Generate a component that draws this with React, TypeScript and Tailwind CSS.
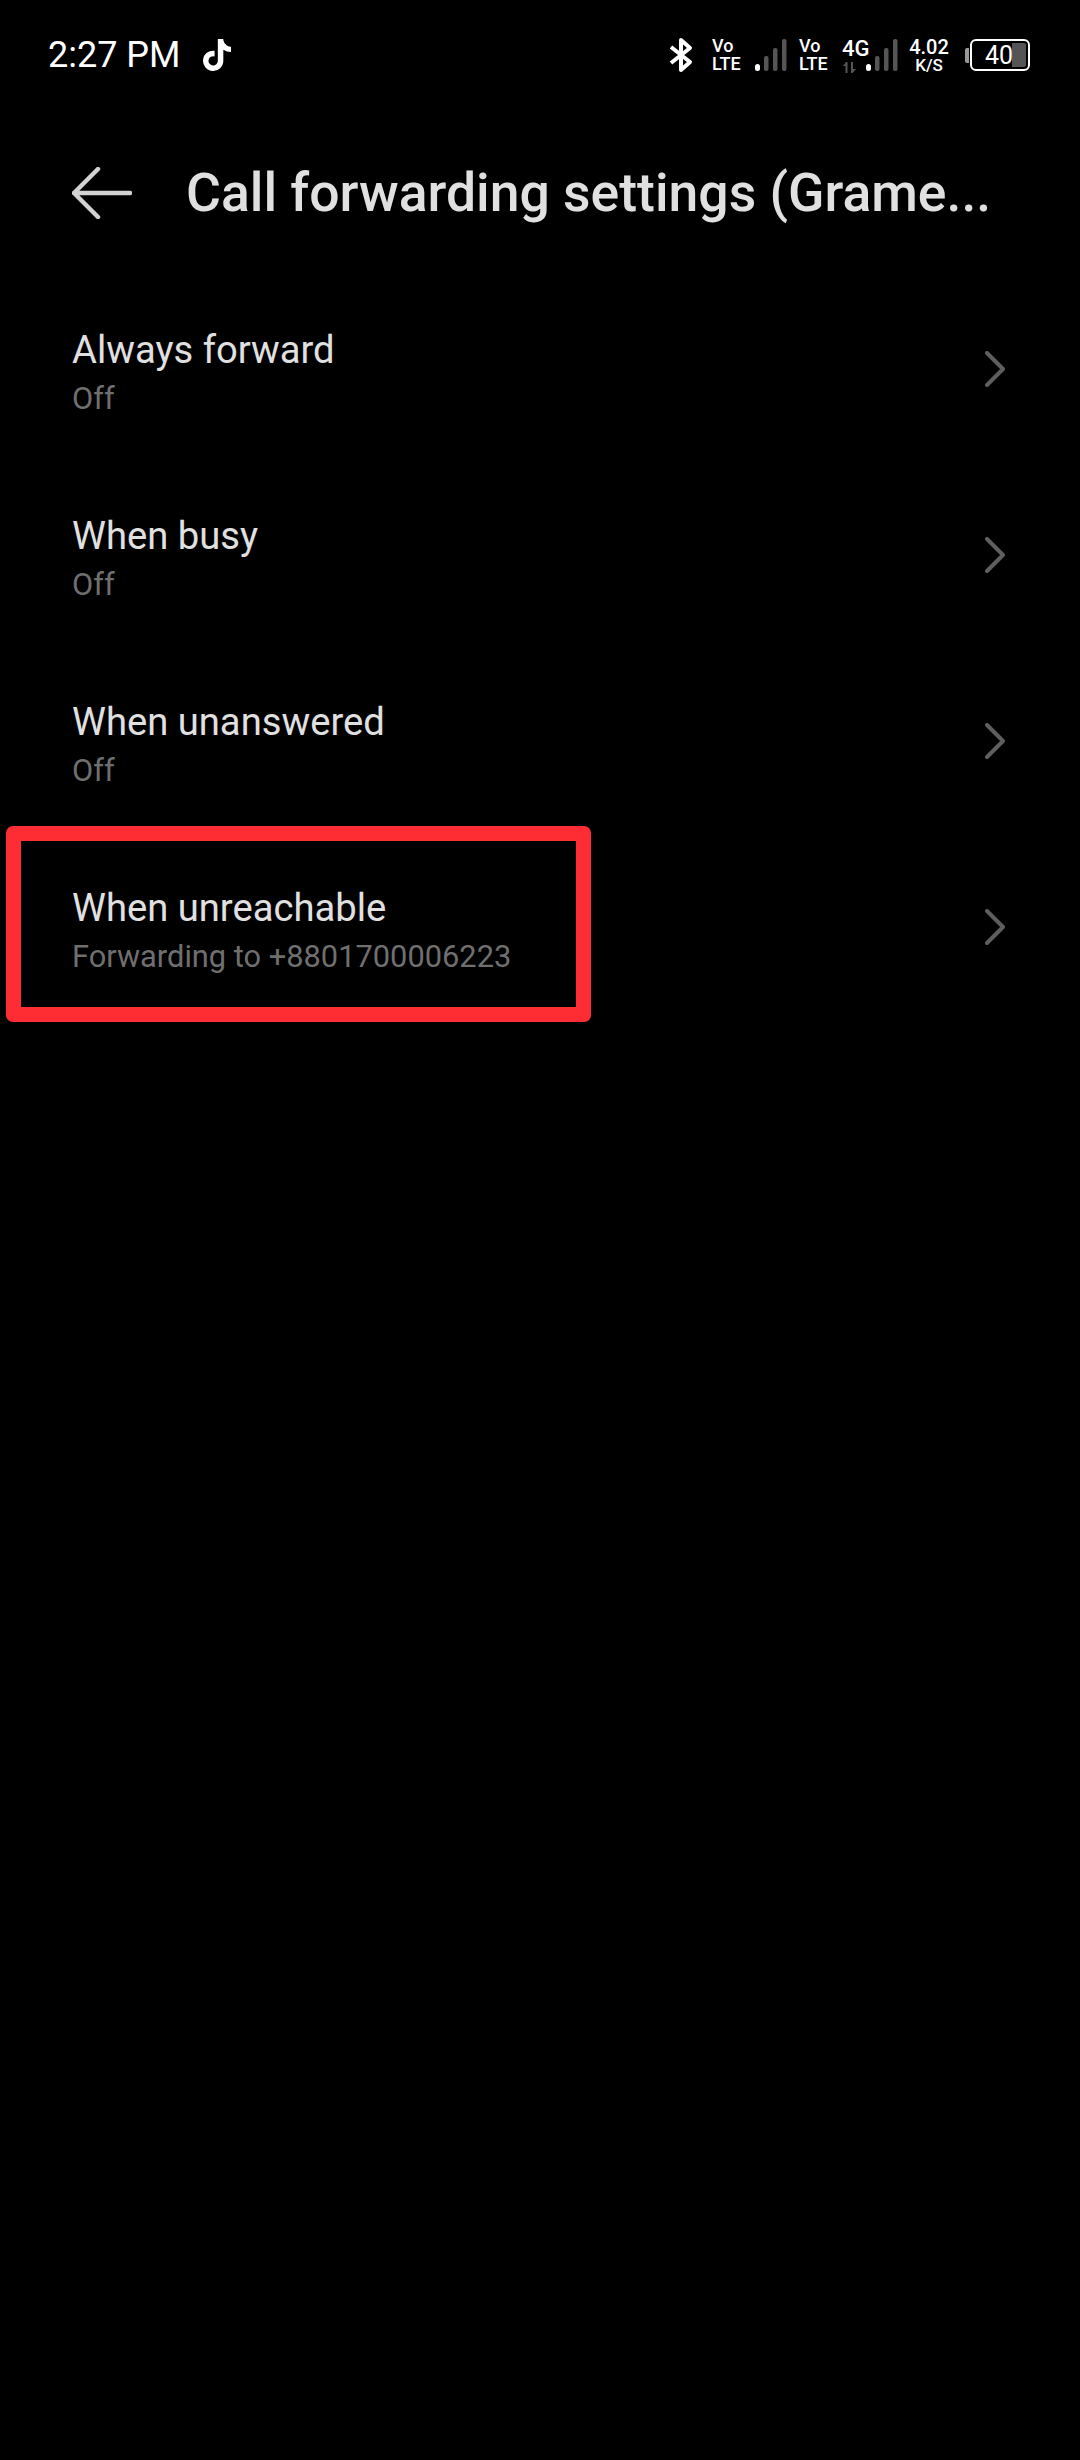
import { FaTiktok } from "react-icons/fa"

const rows = [
  { title: "Always forward", sub: "Off" },
  { title: "When busy", sub: "Off" },
  { title: "When unanswered", sub: "Off" },
  { title: "When unreachable", sub: "Forwarding to +8801700006223", boxed: true },
]

function SignalBars() {
  return (
    <svg width="32" height="32" viewBox="0 0 32 32" className="shrink-0">
      <rect x="0" y="25" width="5" height="7" rx="2.5" fill="#fff" />
      <rect x="9" y="17" width="4.5" height="15" rx="2" fill="#555" />
      <rect x="18" y="9" width="4.5" height="23" rx="2" fill="#555" />
      <rect x="27" y="0" width="4.5" height="32" rx="2" fill="#555" />
    </svg>
  )
}

function VoLte() {
  return (
    <div className="flex flex-col items-start w-[30px] shrink-0 font-medium text-white leading-[18px]">
      <span className="text-[18px]">Vo</span>
      <span className="text-[18px]">LTE</span>
    </div>
  )
}

function StatusBar() {
  return (
    <div className="h-[70px] pt-[40px] pl-[48px] flex items-center justify-between text-white">
      <div className="flex items-center">
        <span className="text-[36px] leading-none">2:27 PM</span>
        <FaTiktok className="ml-[20px] text-[32px]" />
      </div>
      <div className="flex items-center pr-[50px]">
        <svg width="24" height="36" viewBox="0 0 24 36" fill="none" stroke="#fff" strokeWidth="4" strokeLinejoin="round" className="mr-[19px]">
          <path d="M2 10 L21 25 L12 33 V3 L21 11 L2 26" />
        </svg>
        <VoLte />
        <div className="ml-[13px]"><SignalBars /></div>
        <div className="ml-[12px]"><VoLte /></div>
        <div className="ml-[13px] w-[24px] flex flex-col items-start shrink-0 font-medium">
          <span className="text-[22px] leading-[22px]">4G</span>
          <svg width="15" height="11" viewBox="0 0 15 11" className="mt-[2px]">
            <path d="M1 4 L4 0 H5.5 V11 H3.5 V4 Z M9 0 H11 V7 H14 L10.5 11 H9 Z" fill="#555" />
          </svg>
        </div>
        <SignalBars />
        <div className="ml-[11px] w-[40px] flex flex-col items-center font-medium shrink-0">
          <span className="text-[20px] leading-[20px]">4.02</span>
          <span className="text-[17px] leading-[17px]">K/S</span>
        </div>
        <div className="ml-[16px] flex items-center">
          <div className="w-[4px] h-[15px] bg-[#999] rounded-l-[2px] mr-[1px]" />
          <div className="relative w-[60px] h-[32px] border-2 border-white rounded-[6px] p-[2px] flex justify-end">
            <div className="w-[14px] h-full bg-[#555] rounded-r-[2px]" />
            <span className="absolute inset-0 flex items-center justify-center text-[25px] leading-none pr-[2px]">40</span>
          </div>
        </div>
      </div>
    </div>
  )
}

export default function App() {
  return (
    <div className="w-[1080px] h-[2460px] bg-black overflow-hidden font-['Roboto',sans-serif]">
      <StatusBar />

      {/* Header */}
      <div className="h-[106px] mt-[70px] flex items-center pl-[72px]">
        <svg width="60" height="52" viewBox="0 0 60 52" fill="none" stroke="#d2d2d2" strokeWidth="4.5" strokeLinecap="round" strokeLinejoin="round" className="shrink-0">
          <path d="M2 26 H58 M26 2 L2 26 L26 50" />
        </svg>
        <h1 className="ml-[54px] w-[830px] text-[53.5px] leading-none font-medium text-[#e0e0e0] whitespace-nowrap">
          Call forwarding settings (Grame...
        </h1>
      </div>

      {/* Rows */}
      <div className="mt-[30px]">
        {rows.map((row) => (
          <div key={row.title} className="relative h-[186px] pl-[72px] pr-[74px] flex items-center justify-between">
            <div className="mt-[7px]">
              <div className="text-[38.2px] leading-[48px] text-[#e0e0e0]">{row.title}</div>
              <div className="text-[30.8px] leading-[42px] mt-[4px] text-[#6f6f6f]">{row.sub}</div>
            </div>
            <svg width="22" height="36" viewBox="0 0 22 36" fill="none" stroke="#5e5e5e" strokeWidth="4" strokeLinecap="round" strokeLinejoin="round" className="shrink-0">
              <path d="M3 2 L19 18 L3 34" />
            </svg>
            {row.boxed && (
              <div className="absolute left-[6px] -top-[8px] w-[585px] h-[196px] border-[15px] border-[#fe2d34] rounded-[7px]" />
            )}
          </div>
        ))}
      </div>
    </div>
  )
}
